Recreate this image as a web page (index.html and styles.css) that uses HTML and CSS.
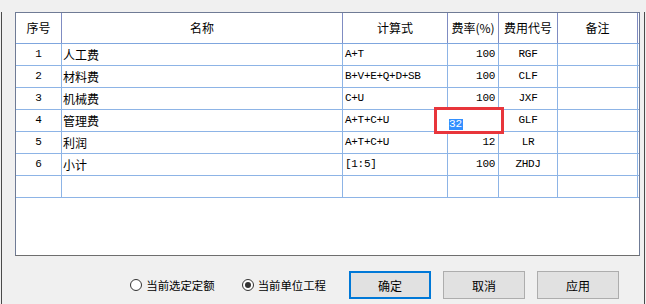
FILE: index.html
```html
<!DOCTYPE html>
<html lang="zh-CN">
<head>
    <meta charset="UTF-8">
    <title>费用汇总</title>
    <link rel="stylesheet" href="styles.css">
</head>
<body>

<div class="window">
    <div class="grid">
        <div class="row head">
            <div class="cell">序号</div>
            <div class="cell">名称</div>
            <div class="cell">计算式</div>
            <div class="cell">费率(%)</div>
            <div class="cell">费用代号</div>
            <div class="cell">备注</div>
        </div>
        <div class="row">
            <div class="cell c-no">1</div>
            <div class="cell c-name">人工费</div>
            <div class="cell c-expr">A+T</div>
            <div class="cell c-rate">100</div>
            <div class="cell c-code">RGF</div>
            <div class="cell"></div>
        </div>
        <div class="row">
            <div class="cell c-no">2</div>
            <div class="cell c-name">材料费</div>
            <div class="cell c-expr">B+V+E+Q+D+SB</div>
            <div class="cell c-rate">100</div>
            <div class="cell c-code">CLF</div>
            <div class="cell"></div>
        </div>
        <div class="row">
            <div class="cell c-no">3</div>
            <div class="cell c-name">机械费</div>
            <div class="cell c-expr">C+U</div>
            <div class="cell c-rate">100</div>
            <div class="cell c-code">JXF</div>
            <div class="cell"></div>
        </div>
        <div class="row">
            <div class="cell c-no">4</div>
            <div class="cell c-name">管理费</div>
            <div class="cell c-expr">A+T+C+U</div>
            <div class="cell c-rate"></div>
            <div class="cell c-code">GLF</div>
            <div class="cell"></div>
        </div>
        <div class="row">
            <div class="cell c-no">5</div>
            <div class="cell c-name">利润</div>
            <div class="cell c-expr">A+T+C+U</div>
            <div class="cell c-rate">12</div>
            <div class="cell c-code">LR</div>
            <div class="cell"></div>
        </div>
        <div class="row">
            <div class="cell c-no">6</div>
            <div class="cell c-name">小计</div>
            <div class="cell c-expr">[1:5]</div>
            <div class="cell c-rate">100</div>
            <div class="cell c-code">ZHDJ</div>
            <div class="cell"></div>
        </div>
        <div class="row">
            <div class="cell"></div>
            <div class="cell"></div>
            <div class="cell"></div>
            <div class="cell"></div>
            <div class="cell"></div>
            <div class="cell"></div>
        </div>

        <!-- cell being edited, marked with a red frame -->
        <div class="edit-box"><span class="sel">32</span></div>
    </div>

    <div class="actions">
        <label class="option"><span class="radio"></span>当前选定定额</label>
        <label class="option checked"><span class="radio"></span>当前单位工程</label>
        <button class="btn default">确定</button>
        <button class="btn">取消</button>
        <button class="btn">应用</button>
    </div>
</div>

</body>
</html>
```

FILE: styles.css
```css
body {
    margin: 0;
    background-color: #f0f0f0;
    font-family: "Noto Sans CJK SC", sans-serif;
    font-size: 12px;
    color: #000;
}
.window {
    margin-left: 1px;
    width: 644px;
    height: 303px;
    box-sizing: border-box;
    border: 1px solid #4a4a4a;
    border-top: none;
    background-color: #f0f0f0;
}
.grid {
    position: relative;
    margin: 12px 4px 0 13px;
    height: 244px;
    box-sizing: border-box;
    border: 1px solid #6f7b95;
    border-bottom-color: #6e6e6e;
    background-color: #fff;
}
.row {
    display: grid;
    grid-template-columns: 46px 281px 105px 51px 59px 80px;
    height: 22px;
    box-sizing: border-box;
    border-bottom: 1px solid #8db4e6;
}
.row.head {
    height: 31px;
    border-bottom-color: #7fa6de;
}
.cell {
    border-right: 1px solid #8db4e6;
    line-height: 21px;
    padding: 0 2px;
    overflow: hidden;
    white-space: nowrap;
}
.head .cell {
    border-right-color: #7f8cc2;
    text-align: center;
    line-height: 30px;
}
.c-no, .c-expr, .c-rate, .c-code {
    font-family: "Liberation Mono", monospace;
    font-size: 11px;
    letter-spacing: -0.3px;
}
.c-no, .c-code {
    text-align: center;
}
.c-name {
    padding-left: 1px;
}
.c-rate {
    text-align: right;
    padding-right: 3px;
}
.edit-box {
    position: absolute;
    left: 418px;
    top: 94px;
    width: 70px;
    height: 27px;
    box-sizing: border-box;
    border: 3px solid #e8353b;
    background-color: #fff;
    padding: 3px 0 0 12px;
}
.sel {
    display: inline-block;
    background-color: #3390ff;
    color: #fff;
    font-family: "Liberation Mono", monospace;
    font-size: 11px;
    line-height: 11px;
    padding-right: 1px;
}
.actions {
    display: flex;
    align-items: center;
    justify-content: flex-end;
    margin-top: 15px;
    padding-right: 25px;
}
.option {
    display: flex;
    align-items: center;
    gap: 4px;
    margin-right: 27px;
    font-size: 11.4px;
}
.option.checked {
    margin-right: 23px;
}
.radio {
    position: relative;
    width: 12px;
    height: 12px;
    box-sizing: border-box;
    border: 1px solid #333;
    border-radius: 50%;
    background-color: #fff;
}
.checked .radio::after {
    content: "";
    position: absolute;
    left: 2px;
    top: 2px;
    width: 6px;
    height: 6px;
    border-radius: 50%;
    background-color: #333;
}
.btn {
    width: 82px;
    height: 28px;
    margin-left: 12px;
    background-color: #e1e1e1;
    border: 1px solid #adadad;
    font-family: "Noto Sans CJK SC", sans-serif;
    font-size: 12px;
    color: #000;
    padding: 0;
}
.btn.default {
    border: 2px solid #0078d7;
    margin-left: 0;
}
```
